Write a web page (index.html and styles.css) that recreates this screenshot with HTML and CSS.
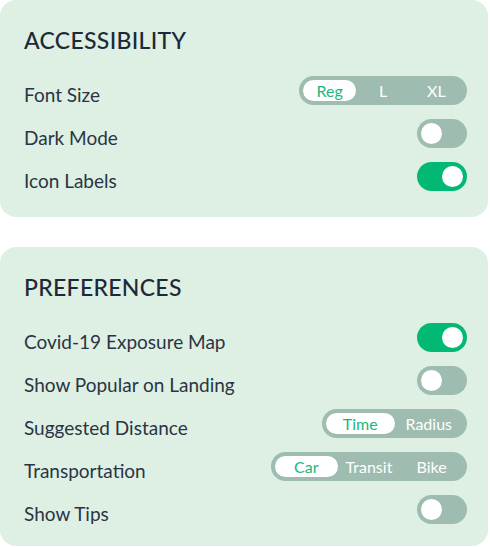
FILE: index.html
```html
<!DOCTYPE html>
<html>
<head>
<meta charset="utf-8">
<link rel="stylesheet" href="styles.css">
</head>
<body>
<section class="card">
  <h2 class="title">ACCESSIBILITY</h2>
  <div class="rows">
    <div class="row">
      <span class="label">Font Size</span>
      <div class="seg seg-size">
        <span class="opt active">Reg</span>
        <span class="opt">L</span>
        <span class="opt">XL</span>
      </div>
    </div>
    <div class="row">
      <span class="label">Dark Mode</span>
      <div class="toggle"><span class="knob"></span></div>
    </div>
    <div class="row">
      <span class="label">Icon Labels</span>
      <div class="toggle on"><span class="knob"></span></div>
    </div>
  </div>
</section>
<section class="card card-2">
  <h2 class="title">PREFERENCES</h2>
  <div class="rows">
    <div class="row">
      <span class="label">Covid-19 Exposure Map</span>
      <div class="toggle on"><span class="knob"></span></div>
    </div>
    <div class="row">
      <span class="label">Show Popular on Landing</span>
      <div class="toggle"><span class="knob"></span></div>
    </div>
    <div class="row">
      <span class="label">Suggested Distance</span>
      <div class="seg seg-dist">
        <span class="opt active">Time</span>
        <span class="opt">Radius</span>
      </div>
    </div>
    <div class="row">
      <span class="label">Transportation</span>
      <div class="seg seg-trans">
        <span class="opt active">Car</span>
        <span class="opt">Transit</span>
        <span class="opt">Bike</span>
      </div>
    </div>
    <div class="row">
      <span class="label">Show Tips</span>
      <div class="toggle"><span class="knob"></span></div>
    </div>
  </div>
</section>
</body>
</html>
```
FILE: styles.css
```css
html, body {
  margin: 0;
  padding: 0;
  background: #ffffff;
}
body {
  width: 489px;
  font-family: Lato, "Open Sans", sans-serif;
  color: #2b3444;
}
.card {
  background: #ddf0e3;
  border-radius: 16px;
  padding: 28px 21px 26px 24px;
  box-sizing: border-box;
  width: 488px;
}
.card-2 {
  margin-top: 30px;
  padding-bottom: 22px;
}
.title {
  margin: 0 0 24px 0;
  font-size: 23px;
  line-height: 24px;
  font-weight: 500;
  color: #1d2939;
  letter-spacing: 0.3px;
}
.rows {
  display: flex;
  flex-direction: column;
  gap: 14px;
}
.row {
  display: flex;
  align-items: center;
  justify-content: space-between;
  height: 29px;
}
.label {
  font-size: 19px;
  line-height: 23px;
  padding-top: 7px;
  color: #2b3444;
}
.seg {
  display: grid;
  grid-auto-flow: column;
  grid-auto-columns: 1fr;
  background: #9fbcb0;
  border-radius: 15px;
  padding: 4px;
  height: 29px;
  box-sizing: border-box;
}
.seg-size { width: 168px; }
.seg-dist { width: 145px; }
.seg-trans { width: 196px; }
.opt {
  display: flex;
  align-items: center;
  justify-content: center;
  font-size: 16px;
  color: #ffffff;
  border-radius: 11px;
}
.opt.active {
  background: #ffffff;
  color: #1bb87a;
}
.toggle {
  width: 50px;
  height: 29px;
  border-radius: 15px;
  background: #9fbcb0;
  padding: 4px;
  box-sizing: border-box;
  display: flex;
  justify-content: flex-start;
}
.toggle.on {
  background: #02b974;
  justify-content: flex-end;
}
.knob {
  width: 21px;
  height: 21px;
  border-radius: 50%;
  background: #ffffff;
}
```
